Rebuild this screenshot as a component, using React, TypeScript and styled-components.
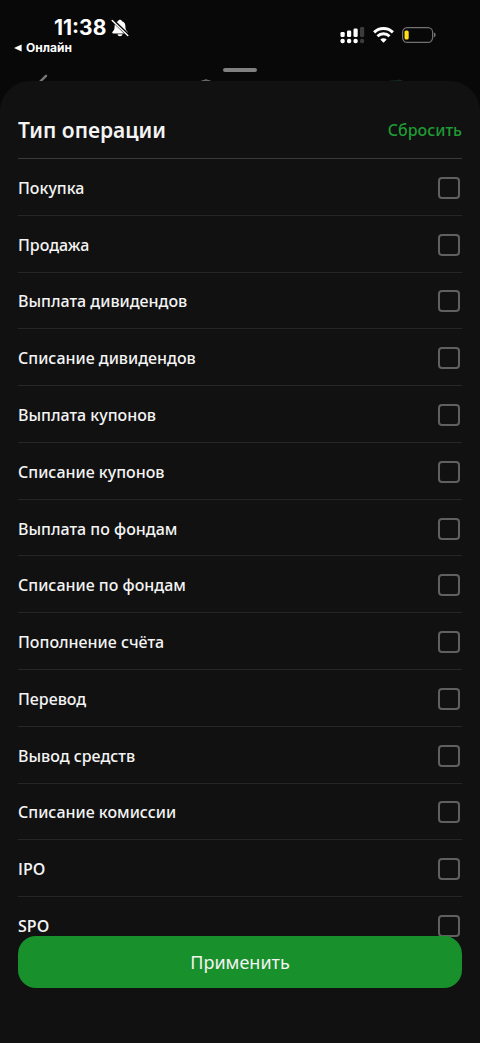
import React, { useState } from "react";
import styled, { createGlobalStyle } from "styled-components";

const GlobalStyle = createGlobalStyle`
  * { box-sizing: border-box; }
  body {
    margin: 0;
    background: #080808;
    color: #f4f4f4;
    font-family: "Noto Sans", "Open Sans", sans-serif;
  }
`;

const Screen = styled.div`
  display: flex;
  flex-direction: column;
  min-height: 100vh;
`;

const StatusBar = styled.header`
  display: flex;
  justify-content: space-between;
  align-items: flex-start;
  padding: 18px 44px 0 14px;
  height: 60px;
  font-family: Inter, "Liberation Sans", sans-serif;
  color: #ffffff;
`;

const Clock = styled.div`
  display: flex;
  align-items: center;
  gap: 5px;
  padding-left: 40px;
  font-size: 21px;
  line-height: 20px;
  font-weight: 700;
`;

const BackToApp = styled.a`
  display: flex;
  align-items: center;
  gap: 4px;
  margin-top: 2px;
  font-size: 12px;
  line-height: 16px;
  font-weight: 700;
  color: inherit;
  text-decoration: none;
`;

const Indicators = styled.div`
  display: flex;
  align-items: center;
  gap: 8px;
  padding-top: 8px;
`;

const NavPeek = styled.div`
  display: grid;
  grid-template-columns: 1fr 34px 1fr;
  height: 21px;
`;

const PeekSide = styled.div<{ $left?: boolean }>`
  display: flex;
  align-items: flex-end;
  justify-content: ${(p) => (p.$left ? "space-between" : "flex-end")};
  padding: ${(p) => (p.$left ? "0 10px 0 38px" : "0 76px 0 0")};
  svg { display: block; }
`;

const Grabber = styled.div`
  align-self: start;
  margin-top: 8px;
  height: 4px;
  border-radius: 2px;
  background: #808080;
`;

const Sheet = styled.main`
  flex: 1;
  display: flex;
  flex-direction: column;
  padding: 0 18px 55px;
  border-radius: 30px 30px 0 0;
  background: #111111;
`;

const SheetHeader = styled.div`
  display: flex;
  align-items: center;
  justify-content: space-between;
  height: 78px;
  padding-top: 20px;
  border-bottom: 1px solid #3a3a3a;
`;

const Title = styled.h1`
  margin: 0;
  font-size: 21px;
  line-height: 28px;
  font-weight: 600;
`;

const ResetButton = styled.button`
  padding: 0;
  border: 0;
  background: none;
  color: #1f9a34;
  font: inherit;
  font-size: 16px;
  line-height: 24px;
  font-weight: 500;
  cursor: pointer;
`;

const OptionList = styled.ul`
  flex: 1;
  display: flex;
  flex-direction: column;
  margin: 0 0 -18px;
  padding: 0;
  list-style: none;
`;

const OptionRow = styled.li`
  flex: 1 0 56px;
  display: flex;
  border-bottom: 1px solid #262626;
`;

const OptionLabel = styled.label<{ $latin: boolean }>`
  flex: 1;
  display: flex;
  align-items: center;
  justify-content: space-between;
  padding: 2px 2px 0 0;
  font-family: ${(p) => (p.$latin ? '"Open Sans", sans-serif' : "inherit")};
  font-size: 16px;
  line-height: 24px;
  font-weight: ${(p) => (p.$latin ? 600 : 500)};
  cursor: pointer;
`;

const Checkbox = styled.input`
  appearance: none;
  width: 22px;
  height: 22px;
  margin: 0;
  border: 2px solid #606060;
  border-radius: 4px;
  cursor: pointer;
  &:checked {
    border-color: #19912d;
    background: #19912d;
  }
`;

const ApplyButton = styled.button`
  position: relative;
  height: 52px;
  border: 0;
  border-radius: 18px;
  background: #18902c;
  color: #f4f4f4;
  font: inherit;
  font-size: 18px;
  line-height: 24px;
  cursor: pointer;
`;

const operations = [
  "Покупка",
  "Продажа",
  "Выплата дивидендов",
  "Списание дивидендов",
  "Выплата купонов",
  "Списание купонов",
  "Выплата по фондам",
  "Списание по фондам",
  "Пополнение счёта",
  "Перевод",
  "Вывод средств",
  "Списание комиссии",
  "IPO",
  "SPO",
];

const isLatin = (name: string) => /^[A-Z]+$/.test(name);

const MutedBell = () => (
  <svg width="18" height="18" viewBox="0 0 18 18" aria-hidden="true">
    <path d="M9 .8c-1 0-1.700.6-2 1.400C4.700 3 3.600 4.800 3.600 7c0 3.600-.8 4.400-2 5.700-.7.800-.3 1.700.7 1.700h13.400c1 0 1.400-.9.700-1.700-1.200-1.300-2-2.100-2-5.700 0-2.200-1.100-4-3.400-4.800C10.700 1.400 10 .8 9 .8ZM6.500 15.300c.2 1.200 1.200 2 2.500 2s2.300-.8 2.500-2Z" fill="#fff" />
    <path d="M1.800 1.400 17 16" stroke="#080808" strokeWidth="3.200" />
    <path d="M1.200 1.600 16.800 16.600" stroke="#fff" strokeWidth="1.400" strokeLinecap="round" />
  </svg>
);

const Signal = () => (
  <svg width="25" height="18" viewBox="0 0 25 18" fill="#fff" aria-hidden="true">
    <rect x="0.500" y="6" width="4.200" height="5" rx="1.300" />
    <rect x="7" y="4.500" width="4.200" height="6.500" rx="1.300" />
    <rect x="13.500" y="2.500" width="4.200" height="8.500" rx="1.300" />
    <rect x="20" y="1" width="4.200" height="10" rx="1.300" fill="#3c3c3c" />
    <rect x="0.500" y="12.700" width="4.200" height="4.600" rx="1.800" />
    <rect x="7" y="12.700" width="4.200" height="4.600" rx="1.800" />
    <rect x="13.500" y="12.700" width="4.200" height="4.600" rx="1.800" />
    <rect x="20" y="12.700" width="4.200" height="4.600" rx="1.800" fill="#3c3c3c" />
  </svg>
);

const Wifi = () => (
  <svg width="21" height="16" viewBox="0 0 21 16" fill="none" stroke="#fff" strokeWidth="2.900" aria-hidden="true">
    <path d="M1.100 5.400a13.400 13.400 0 0 1 18.800 0" />
    <path d="M4.500 9.200a8.500 8.500 0 0 1 12 0" />
    <path d="M10.500 15.800 7.300 12.600a4.600 4.600 0 0 1 6.400 0Z" fill="#fff" stroke="none" />
  </svg>
);

const Battery = () => (
  <svg width="34" height="16" viewBox="0 0 34 16" aria-hidden="true">
    <rect x="0.600" y="0.600" width="30" height="14.800" rx="4.600" fill="none" stroke="#727272" strokeWidth="1.200" />
    <path d="M31.900 5.600c1.100.3 1.700 1.200 1.700 2.400s-.6 2.100-1.700 2.400Z" fill="#727272" />
    <rect x="2.500" y="3.500" width="4.200" height="9" rx="1.500" fill="#ffe01a" />
  </svg>
);

export default function App() {
  const [selected, setSelected] = useState<string[]>([]);

  const toggle = (name: string) =>
    setSelected((current) =>
      current.includes(name) ? current.filter((item) => item !== name) : [...current, name]
    );

  return (
    <>
      <GlobalStyle />
      <Screen>
        <StatusBar>
          <div>
            <Clock>
              11:38
              <MutedBell />
            </Clock>
            <BackToApp href="#back">
              <svg width="8" height="8" viewBox="0 0 8 8" aria-hidden="true">
                <path d="M0 4 7.600.5v7Z" fill="#fff" />
              </svg>
              Онлайн
            </BackToApp>
          </div>
          <Indicators>
            <Signal />
            <Wifi />
            <Battery />
          </Indicators>
        </StatusBar>
        <NavPeek>
          <PeekSide $left>
            <svg width="10" height="7" viewBox="0 0 10 7" aria-hidden="true">
              <path d="M8 1.800 1.500 8.300" stroke="#777" strokeWidth="2.400" strokeLinecap="round" />
            </svg>
            <svg width="14" height="3" viewBox="0 0 14 3" aria-hidden="true">
              <path d="M2 3c1.500-1.200 3-.7 5-2 2 1.300 3.500.8 5 2Z" fill="#666" />
            </svg>
          </PeekSide>
          <Grabber />
          <PeekSide>
            <svg width="16" height="2" viewBox="0 0 16 2" aria-hidden="true">
              <path d="M0 2C4 1.200 7 1.400 9 1l3-.6L15 2Z" fill="#14291f" />
            </svg>
          </PeekSide>
        </NavPeek>
        <Sheet>
          <SheetHeader>
            <Title>Тип операции</Title>
            <ResetButton type="button" onClick={() => setSelected([])}>
              Сбросить
            </ResetButton>
          </SheetHeader>
          <OptionList>
            {operations.map((name) => (
              <OptionRow key={name}>
                <OptionLabel $latin={isLatin(name)}>
                  {name}
                  <Checkbox
                    type="checkbox"
                    checked={selected.includes(name)}
                    onChange={() => toggle(name)}
                  />
                </OptionLabel>
              </OptionRow>
            ))}
          </OptionList>
          <ApplyButton type="button">Применить</ApplyButton>
        </Sheet>
      </Screen>
    </>
  );
}
